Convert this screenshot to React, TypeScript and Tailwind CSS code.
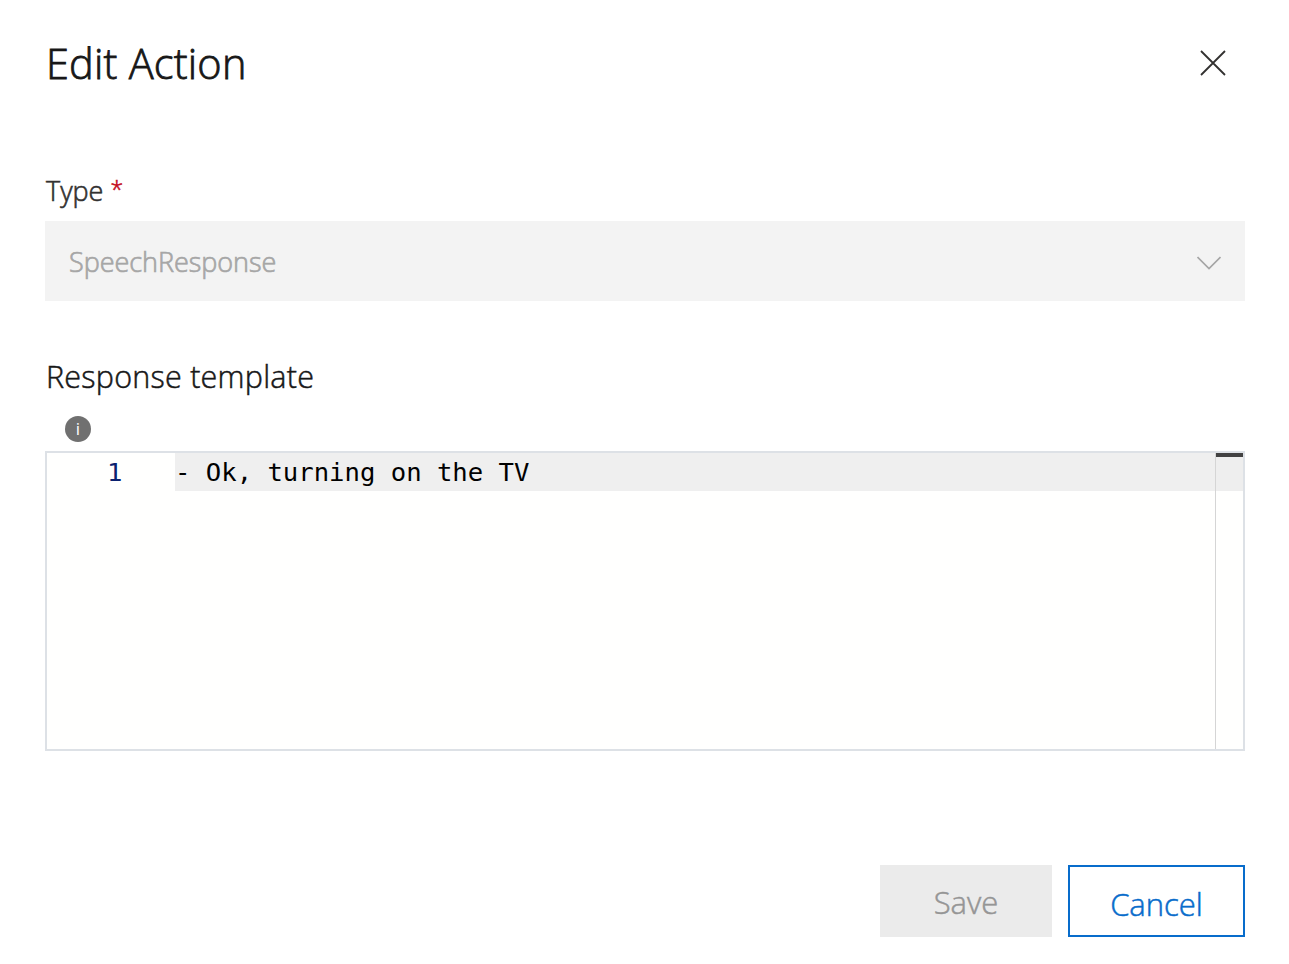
export default function App() {
  return (
    <main className="flex h-[964px] w-[1289px] flex-col bg-white pr-11 pl-[45px] font-['Open_Sans','Noto_Sans',sans-serif] font-light text-[#171717]">
      <header className="flex h-[126px] items-center justify-between pr-[19px]">
        <h1 className="pt-px pl-px text-[41.500px] leading-none tracking-[0.2px] whitespace-nowrap [-webkit-text-stroke:0.8px_#171717]">Edit Action</h1>
        <button aria-label="Close" className="size-[26px]">
          <svg viewBox="0 0 26 26" className="size-full" fill="none" stroke="#323130" strokeWidth="1.8"><path d="M1 1 25 25M25 1 1 25" /></svg>
        </button>
      </header>
      <label className="mt-[45px] flex h-[40px] items-center text-[27px] whitespace-nowrap text-[#323130] [-webkit-text-stroke:0.6px]">
        <span className="pt-px pl-px">Type</span><span className="ml-[7px] pb-[4px] text-[23px] text-[#c50f1f]">*</span>
      </label>
      <div className="mt-[10px] flex h-[80px] items-center justify-between bg-[#f3f3f3] px-6 text-[27px] text-[#a6a6a6]">
        <span className="pt-[3px] tracking-[-0.050px] [-webkit-text-stroke:0.7px]">SpeechResponse</span>
        <svg viewBox="0 0 24 14" className="mt-[3px] h-[14px] w-6" fill="none" stroke="#a6a6a6" strokeWidth="1.7"><path d="m.5 1 11.5 11.5L23.500 1" /></svg>
      </div>
      <h2 className="mt-[55px] flex h-[40px] items-center pt-px pl-px text-[30.500px] tracking-[0.24px] whitespace-nowrap [-webkit-text-stroke:0.5px]">Response template</h2>
      <div className="mt-5 ml-5 flex size-[26px] items-center justify-center rounded-full bg-[#707070] text-[17px] font-normal text-white">i</div>
      <section className="mt-[9px] flex h-[300px] border-2 border-[#dde1e6] bg-[#fffffe] font-['DejaVu_Sans_Mono',monospace] text-[25.600px]">
        <div className="w-[128px] pl-[60px] leading-[38px] text-[#0b216f]">1</div>
        <div className="h-[38px] flex-1 bg-[#efefef] leading-[38px] whitespace-pre text-black">- Ok, turning on the TV</div>
        <div className="w-[28px] border-l border-[#d5d5d5]"><div className="h-[38px] border-t-4 border-[#424242] bg-[#eee]" /></div>
      </section>
      <footer className="mt-[114px] flex h-[72px] justify-end gap-4 text-[31px] [-webkit-text-stroke:0.5px]">
        <button className="w-[172px] bg-[#ebebeb] pt-[3px] text-[#959595]">Save</button>
        <button className="w-[177px] border-2 border-[#086ccb] pt-[7px] text-[#086ccb]">Cancel</button>
      </footer>
    </main>
  );
}
